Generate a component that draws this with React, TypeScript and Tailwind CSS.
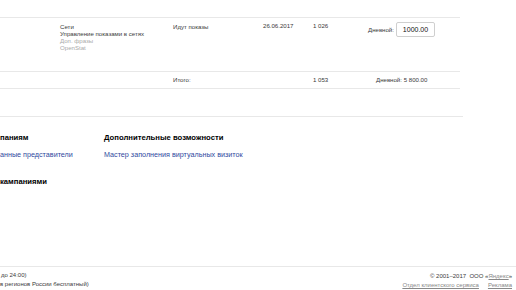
import React from "react";

export default function App() {
  return (
    <div
      className="w-[516px] h-[290px] bg-white overflow-hidden flex flex-col text-[#3a3a3a]"
      style={{ fontFamily: '"Liberation Sans", Arial, sans-serif' }}
    >
      <div className="flex-1 w-[460px]">
        <div className="h-[17px]" />
        {/* Row 1 */}
        <div className="flex h-[54px] border-t border-[#e8e8e8] text-[6.1px] leading-[7px]">
          <div className="w-[60px] shrink-0" />
          <div className="w-[113px] shrink-0 pt-[4.5px]">
            <div>Сети</div>
            <div>Управление показами в сетях</div>
            <div className="text-[#aaa]">Доп. фразы</div>
            <div className="text-[#aaa]">OpenStat</div>
          </div>
          <div className="w-[90px] shrink-0 pt-[4.5px]">Идут показы</div>
          <div className="w-[50px] shrink-0 pt-[4px]">26.06.2017</div>
          <div className="w-[55px] shrink-0 pt-[4px]">1 026</div>
          <div className="flex items-start pt-[4px]">
            <span className="mt-[4px] w-[28px]">Дневной:</span>
            <div className="w-[39px] h-[15px] border border-[#cfcfcf] rounded-[2px] flex items-center justify-center text-[7px] text-[#111]">
              1000.00
            </div>
          </div>
        </div>
        {/* Total row */}
        <div className="flex h-[18px] border-t border-b border-[#e8e8e8] text-[6.1px] leading-[16px]">
          <div className="w-[173px] shrink-0" />
          <div className="w-[140px] shrink-0">Итого:</div>
          <div className="w-[55px] shrink-0">1 053</div>
          <div className="pl-[8px]">Дневной: 5 800.00</div>
        </div>
        {/* Sections */}
        <div className="mt-[27px] w-[463px] border-t border-[#e8e8e8] flex">
          <div className="w-[104px] shrink-0 pt-[16px]">
            <div className="text-[7.7px] leading-[10px] font-bold text-black">паниям</div>
            <div className="mt-[7px] text-[7.2px] leading-[10px] text-[#2f4aa0]">анные представители</div>
            <div className="mt-[17px] text-[7.7px] leading-[10px] font-bold text-black">кампаниями</div>
          </div>
          <div className="pt-[16px]">
            <div className="text-[7.7px] leading-[10px] font-bold text-black">Дополнительные возможности</div>
            <div className="mt-[7px] text-[7.2px] leading-[10px] text-[#2f4aa0]">
              Мастер заполнения виртуальных визиток
            </div>
          </div>
        </div>
      </div>
      {/* Footer */}
      <div className="h-[24px] border-t border-[#e8e8e8] flex justify-between text-[6px] leading-[9px]">
        <div className="pt-[4px]">
          <div className="pl-[1px]">до 24:00)</div>
          <div>в регионов России бесплатный)</div>
        </div>
        <div className="pt-[5px] pr-[4px] text-right">
          <div>
            © 2001–2017&nbsp; ООО «<span className="text-[#888] underline">Яндекс</span>»
          </div>
          <div className="flex gap-[9px] justify-end">
            <span className="text-[#888] underline">Отдел клиентского сервиса</span>
            <span className="text-[#888] underline">Реклама</span>
          </div>
        </div>
      </div>
    </div>
  );
}
